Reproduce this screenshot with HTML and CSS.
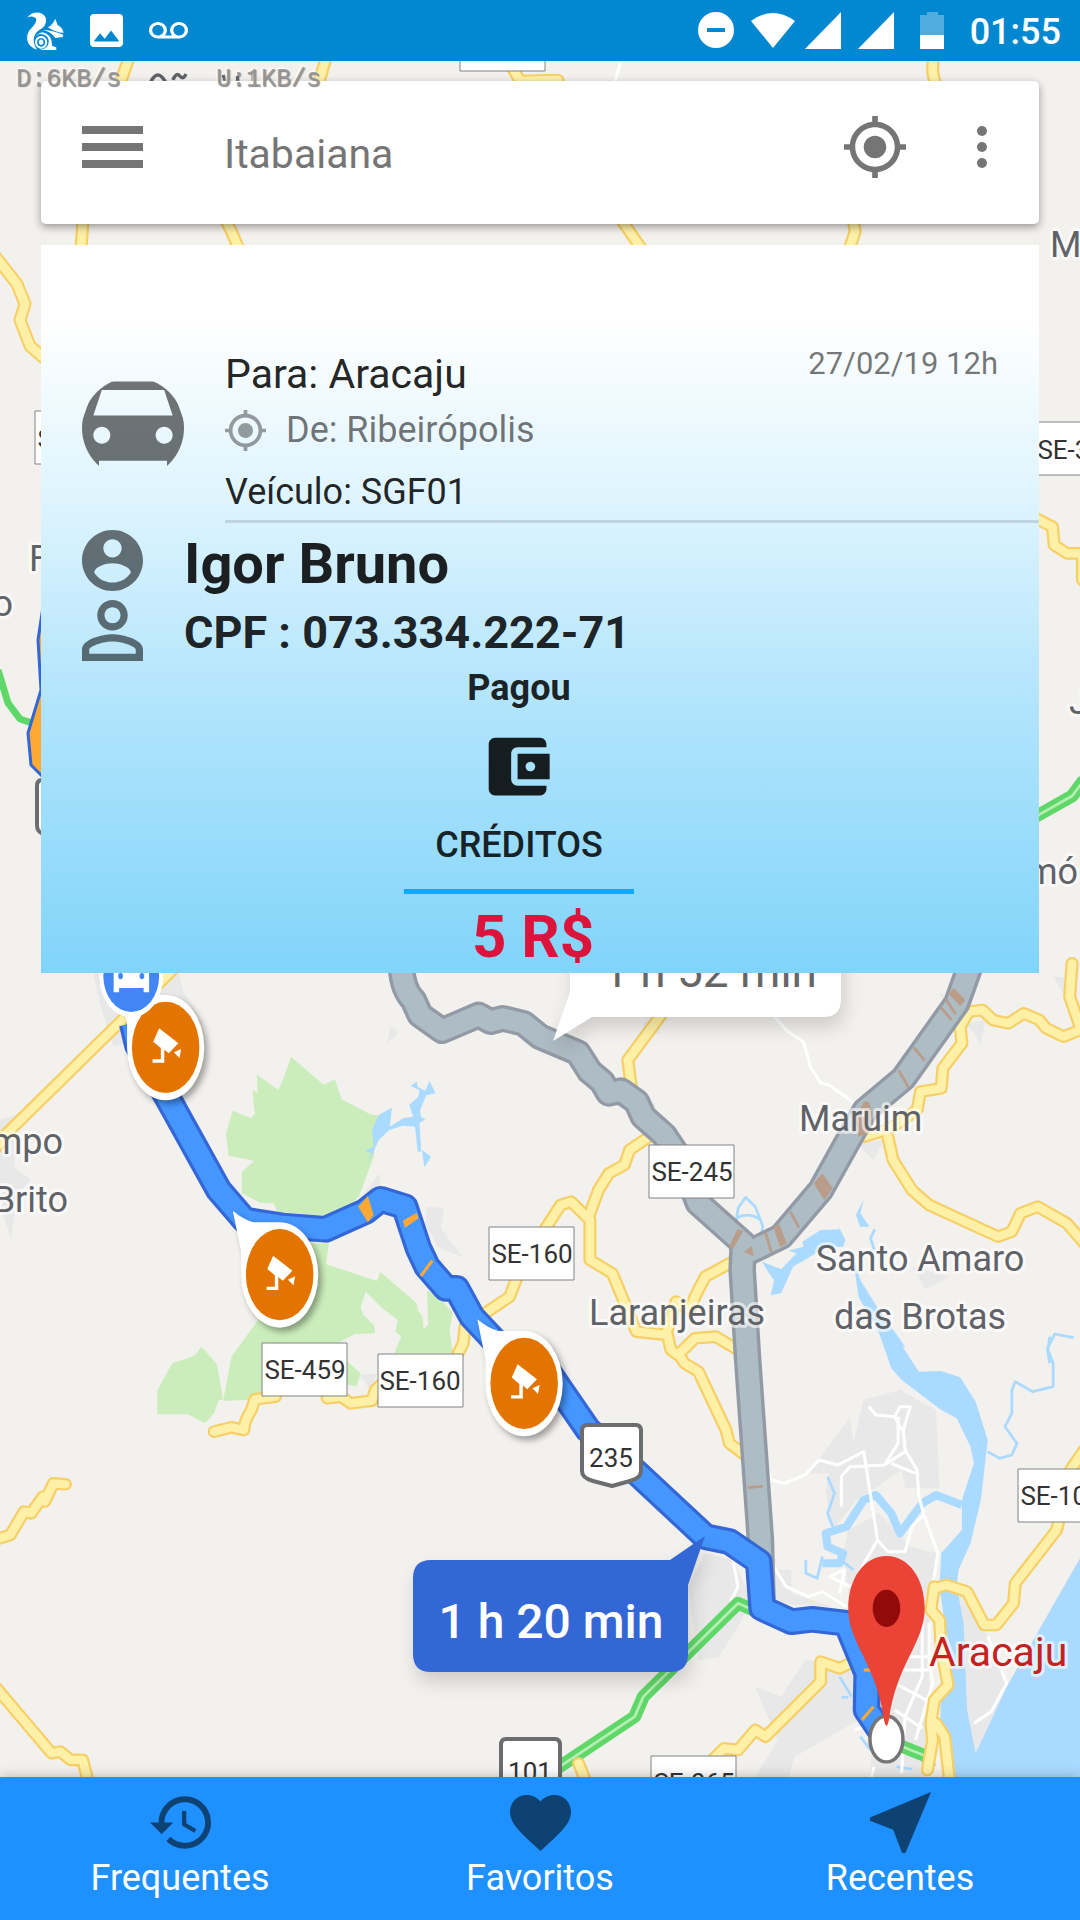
FILE: index.html
```html
<!DOCTYPE html>
<html lang="pt-BR">
<head>
<meta charset="utf-8">
<meta name="viewport" content="width=device-width, initial-scale=1">
<title>Itabaiana</title>
<link rel="stylesheet" href="styles.css">
</head>
<body>
<header class="status">
  <div class="status-group">
    <svg class="squirrel" viewBox="78 35 110 113" preserveAspectRatio="none" aria-hidden="true">
      <path d="M78 52Q92 34 116 37 138 44 134 66 132 76 122 84 100 94 98 116 98 134 108 147 84 140 79 120 75 98 92 82 108 66 105 54 94 44 78 52zM140 80Q154 74 162 55L169 74Q184 82 187 97 164 96 140 80zM124 88Q154 90 186 103L184 109 162 112Q150 94 124 88zM124 95Q152 100 153 136L165 140V148H116Q142 144 143 122 142 104 118 100 106 102 102 112 106 98 124 95z"/>
      <path fill-rule="evenodd" d="M120 106a18 19 0 1 0 .1 0zM120 112a12 13 0 1 1-.1 0zM120 117a7 8 0 1 0 .1 0z"/>
    </svg>
    <svg class="photo" viewBox="3 3 18 18" aria-hidden="true"><path d="M21 19V5c0-1.100-.9-2-2-2H5c-1.100 0-2 .9-2 2v14c0 1.100.9 2 2 2h14c1.100 0 2-.9 2-2zM8.500 13.500l2.500 3.010L14.500 12l4.500 6H5l3.500-4.500z"/></svg>
    <svg class="voicemail" viewBox="0 6 24 12" preserveAspectRatio="none" aria-hidden="true"><path d="M18.500 6C15.460 6 13 8.460 13 11.500c0 1.330.47 2.550 1.260 3.500H9.740c.79-.95 1.260-2.170 1.260-3.500C11 8.460 8.540 6 5.500 6S0 8.460 0 11.500 2.460 17 5.500 17h13c3.040 0 5.500-2.460 5.500-5.500S21.540 6 18.500 6zm-13 9C3.570 15 2 13.430 2 11.500S3.570 8 5.500 8 9 9.570 9 11.500 7.430 15 5.500 15zm13 0c-1.930 0-3.500-1.570-3.500-3.500S16.570 8 18.500 8 22 9.570 22 11.500 20.430 15 18.500 15z"/></svg>
  </div>
  <div class="status-group status-right">
    <svg width="196" height="38" viewBox="0 0 196 38" aria-hidden="true">
      <circle cx="18" cy="18" r="18"/><path class="status-minus" d="M9 16h18v4H9z"/>
      <path d="M53 9Q75-7 97 9L75 36zM143 0V37H107zM196 0V37H160z"/>
    </svg>
    <svg class="battery" width="24" height="38" viewBox="0 0 24 38" aria-hidden="true"><path opacity=".3" d="M7 0h11v3h6v20H0V3h7z"/><path d="M0 23h24v14H0z"/></svg>
    <time>01:55</time>
  </div>
</header>

<main>
  <svg class="map" viewBox="0 61 1080 1716" preserveAspectRatio="xMidYMin slice" role="img" aria-label="Mapa da rota até Aracaju">
    <defs>
      <g id="road-nw"><path d="M376 170L348 250M948 170L925 250M241 660L235 750M655 660L670 690 695 750M1480 190L1510 243 1620 240M2710 170L2708 215 2715 250M1805 660L1865 750M2478 660L2483 695 2465 750"/></g>
      <g id="road-sw"><path d="M-20 575L20 520 350 185 500 30M622 1415L672 1402 708 1410Q710 1380 730 1350L740 1318 800 1310M950 1315L990 1310 1018 1330 1080 1322 1090 1290 1110 1270M1330 1180L1345 1150 1350 1100 1430 1045 1480 1010 1500 955M-10 1738L30 1725 70 1655 90 1660 125 1610 130 1625 155 1570 190 1573M-10 2185L150 2380 175 2375 205 2400 240 2400 260 2480"/></g>
      <g id="road-e"><path d="M355 160L255 300 265 380M310 535L260 570 245 615 200 640 170 690 145 760M10 815L60 735 90 725 145 780 145 900 210 940 250 1040 280 1115 370 1125 380 1170 400 1185 450 1135 510 1130 575 1170M560 905L480 950 450 1010 435 1050 395 1025 370 1110M1580 205L1520 230 1470 205 1450 180 1405 160 1360 190 1315 180 1285 150 1245 155 1220 200 1225 250 1170 325 1165 385 1105 395 1095 450 1040 490 1005 510 940 530M1010 530L1025 600 1080 690 1130 735 1330 830 1370 815 1395 760 1445 740 1530 790 1580 850M1545 10L1538 110 1568 200M400 1180L420 1210 460 1235 540 1410 550 1450 595 1485M1430-1330L1488-1300 1493-1245 1530-1220 1580-1220M1575-1220V-1140"/></g>
      <g id="road-se"><path d="M1145 745L1180 735 1240 755 1290 855 1325 855 1375 790 1380 730 1500 570 1510 530M1580 330L1540 390M1145 740L1135 810 1160 840 1165 930 1185 1035 1145 1080 1135 1150 1140 1200 1125 1290M1150 1150L1175 1190 1190 1330M500 1260L535 1225 575 1230 625 1170 655 1190 815 1025 815 965 870 985 920 960M112 1270L135 1330"/></g>
      <path id="route-alt" d="M-403 20Q-398 90-368 120L-348 165-284 212-178 165-143 185-108 175-48 190 0 230 110 278 145 335 180 365 200 400 235 392 280 425 300 470 360 525 415 610 460 730 590 850 587 930 603 1200 640 1740 645 1940M1255 0L1210 130 1055 355 945 450 885 560 815 690 700 830 600 880"/>
      <path id="route-w" d="M385 190L400 255 490 420 635 690 710 780 820 798 945 808 1060 755 1105 718 1175 740 1215 865 1240 920 1295 985 1325 985 1370 1070 1470 1180 1560 1260"/>
      <path id="route-e" d="M0 60L80 180 140 270 210 330 480 590 550 605 635 665 645 805 730 845 790 838 890 850 950 1000 948 1110 1000 1190"/>
      <g id="camera">
        <path class="pin-white" d="M-136-192Q-105-165-75-157H0A112 158 0 0 1 0 159A112 158 0 0 1-112 0V-70Z"/>
        <ellipse class="pin-orange" rx="98" ry="137"/>
        <path fill="#fff" d="M-19-57L37-12 9 18-4 7V46H-38V36H-14V2L-36-17zM45 5L40 32 24 15z"/>
      </g>
      <g id="route-shield"><path class="shield" d="M7 2H56Q61 2 61 8V48Q61 55 50 58L32 63 13 58Q2 55 2 48V8Q2 2 7 2z"/></g>
      <rect id="state-sign" class="sign" width="85" height="53"/>
    </defs>

    <rect class="land" y="61" width="1080" height="1716"/>

    <!-- Terrain, west -->
    <g transform="translate(0 960) scale(.3444 .3333)">
      <path class="urban" d="M270 40H520L530 90 590 190 330 260 295 150zM1240 740L1290 745 1280 805 1345 893 1270 860 1235 790zM1100 640L1108 690 1045 720zM0 480L60 460 40 620 90 660 50 700 32 840 0 730zM1135 198L1158 220 1124 250zM1045 1245L1095 1240 1075 1290z"/>
      <path class="park" d="M845 290L940 374 972 358 992 418 1075 463 1120 470 1090 540 1085 590 1042 710 980 770 805 755 795 730 755 728 702 700V635L738 603 712 596 664 588 656 522 675 452 730 475 740 460 733 390 748 400 746 344 808 389 825 350zM955 850L947 913 1095 963 1104 935 1210 1030 1213 1050 1227 1070 1230 1108 1243 1095 1240 990 1290 1030 1315 1060 1305 1110 1315 1180H1145L1165 1130 1148 1115 1155 1080 1110 1045 1062 995 1047 1040 1055 1065 1088 1098V1120L1030 1122 980 1150 1010 1205 1047 1240 1035 1280 990 1270 760 1318 648 1323 672 1190 750 1080 850 1000 900 850zM585 1160L630 1212 648 1320 635 1320 622 1360 595 1390 545 1363H457V1290L500 1210 565 1187z"/>
      <path class="water" d="M1060 572L1085 560 1080 510 1100 465 1138 443 1132 500 1170 475 1200 470 1188 435 1215 410 1218 390 1192 378 1210 365 1212 380 1235 392 1247 363 1265 400 1238 406 1220 450 1222 470 1235 478 1218 490 1223 575 1213 575 1205 500 1170 497 1130 510 1100 540 1068 612 1078 580zM1225 570L1252 590 1232 622z"/>
      <g class="casing"><use href="#road-sw"/></g><g class="paving"><use href="#road-sw"/></g>
    </g>
    <!-- Terrain, east -->
    <g transform="translate(540 960) scale(.3444 .3333)">
      <path class="urban" d="M1490 50L1545 55 1525 110zM300 185H350L345 220H300zM1235 190L1292 180 1280 260 1262 220zM920 550L1000 540 968 600zM1080 920L1190 950 1120 988zM310 430H335V480zM1160 100L1190 110 1180 140z"/>
      <path class="water" d="M905 870L925 1010 985 1120 1000 1160H1060L1040 1130 990 1060 930 960zM670 1006L680 960 665 940 645 905 700 928 745 880 720 872 765 860 762 845 815 810 870 808 865 795 887 840 880 860 830 862 735 920 700 1000zM940 720L930 760 957 800 930 800 917 765z"/>
      <path class="stream" d="M568 800L575 745 597 712 625 740 647 800 640 840M570 775Q600 755 640 778M490 710L510 730M972 808L960 835 975 885M1550 1133L1495 1122 1473 1165 1480 1210"/>
      <path class="lane" d="M680 170L720 215 765 245 785 320 815 370 840 375 920 435"/>
    </g>
    <!-- Terrain, coast -->
    <g transform="translate(540 1340) scale(.3444 .3333)">
      <path class="urban" d="M940 180L1045 150 1150 210 1160 445H1060L1050 390 920 480 850 570 830 450 840 400 780 400 900 230 910 310zM895 570L985 520 1075 620 1155 640 1135 750 1125 930 1145 1260 1110 1320H960L970 900 900 790 880 640zM430 740L480 640 560 660 615 780 580 850 520 950 460 960zM660 690H730V760L850 800 680 790zM625 1040L700 1070 770 960 920 970 940 1130 740 1250 720 1320H620L690 1200zM1215 760L1300 890 1360 1030 1265 1240 1230 1100z"/>
      <path class="water" d="M985-20L1040 0 1100 95 1165 93 1220 112 1265 185 1300 300 1280 480 1250 610 1215 690 1210 740 1230 850 1240 1110 1265 1240 1355 1040 1568 655V1320H1200L1160 1200 1165 1050 1200 1030 1160 740 1165 640 1225 570V480L1260 370 1250 320 1210 235 1165 210 1050 120 1020 85z"/>
      <path class="creek" d="M1225 495L1150 465 1110 490 1045 580 1020 520 975 465 940 480 890 560 830 580 835 620 880 640 870 670 820 670"/>
      <path class="stream" d="M835 410L855 460 835 520 850 560M820 650L805 715 772 700V660M880 665L910 690M1480-10L1475 30 1490 70V140L1430 155 1380 125 1370 150V220L1350 260 1385 310 1370 345 1335 355 1300 335M870 1010L905 1070M875 1072H895M930 1190L960 1230M1035 1280L1080 1288"/>
      <path class="lane" d="M655 370L670 420 710 430 770 405 810 360 865 375 940 335 980 600 1010 635 1060 635 1080 560 1115 525 1155 640 1140 740M955 200L975 225 1030 230 1045 200 1075 200 1055 270 1060 330 1095 390 1100 470 1115 525M1030 230L1050 270M1040 230V310L1000 375 900 380 875 410V500M1060 335L1000 375M1020 370L1090 400M980 600L930 690M660 650L715 740 780 770 820 755 890 800M560 660L575 740 555 780 575 800M840 710L885 690 870 760M840 710L900 740M1130 850V960L1140 1030 1090 1200M1110 850V1010L1060 1130 1050 1300M1040 1035L1130 1085M1050 950H1130M1040 990H1130M1030 1110L1110 1165M915 1170L940 1160M970 1280L960 1320M1260 1150L1310 1115 1355 1030 1300 890"/>
      <path class="thruway" d="M50 1285L275 1130 300 1070 575 790 630 815M1040 1215L1125 1250 1130 1280"/>
      <path class="thruway-line" d="M50 1285L275 1130 300 1070 575 790 630 815M1040 1215L1120 1248"/>
    </g>

    <g transform="scale(.3444 .3333)">
      <path class="lane" d="M1803 183L1786 243"/>
      <g class="casing"><use href="#road-nw"/></g><g class="paving"><use href="#road-nw"/></g>
      <path class="ghost" d="M438 245Q458 205 480 245M502 240Q512 215 522 228T540 222M648 225L655 245M690 228V245M735 220V245"/>
    </g>
    <g transform="translate(540 960) scale(.3444 .3333)">
      <g class="casing"><use href="#road-e"/></g><g class="paving"><use href="#road-e"/></g>
      <path class="thruway" d="M1430-425L1545-492 1580-540"/><path class="thruway-line" d="M1430-425L1545-492 1580-540"/>
    </g>
    <g transform="translate(540 1340) scale(.3444 .3333)">
      <g class="casing"><use href="#road-se"/></g><g class="paving"><use href="#road-se"/></g>
    </g>
    <path class="west-casing" d="M-5 256L17 284 25 304 20 320 30 346 45 359"/>
    <path class="west-paving" d="M-5 256L17 284 25 304 20 320 30 346 45 359"/>
    <path class="west-thruway" d="M-2 670L8 703 20 719 32 723"/>
    <path class="west-route" d="M44 600L38 640 41 690 28 733 31 765 46 780"/>

    <!-- Routes -->
    <g transform="translate(540 960) scale(.3444 .3333)">
      <use class="alt-edge" href="#route-alt"/><use class="alt-fill" href="#route-alt"/>
      <path class="slow" d="M1185 100L1203 85 1235 120 1220 138zM940 425H955L965 460 955 520 925 530 915 480zM795 670L820 640 850 685 825 720zM678 800L695 793 716 850 697 862zM573 808L590 812 562 865 548 862zM592 875L615 858 620 888z"/>
      <path class="slow-line" d="M1178 118L1207 162M1162 140L1195 180M1085 262L1117 302M1042 332L1070 382M727 755L752 803M655 818L672 878M603 1583L648 1579"/>
    </g>
    <g transform="translate(0 960) scale(.3444 .3333)">
      <use class="main-edge" href="#route-w"/><use class="main-fill" href="#route-w"/>
      <path class="jam" d="M1040 740L1068 708 1085 765 1068 787zM1170 782L1210 758 1215 775 1176 803z"/>
      <path class="jam-line" d="M1222 948L1255 902"/>
    </g>
    <g transform="translate(540 1340) scale(.3444 .3333)">
      <use class="main-edge" href="#route-e"/><use class="main-fill" href="#route-e"/>
      <path class="jam-line" d="M935 1140L968 1100M940 990H965"/>
    </g>

    <!-- Road numbers -->
    <g class="sign-text">
      <use href="#state-sign" x="460" y="18"/>
      <use href="#state-sign" x="262" y="1343"/><text x="305" y="1379">SE-459</text>
      <use href="#state-sign" x="378" y="1354"/><text x="420" y="1390">SE-160</text>
      <use href="#state-sign" x="489" y="1227"/><text x="532" y="1263">SE-160</text>
      <use href="#state-sign" x="649" y="1145"/><text x="692" y="1181">SE-245</text>
      <use href="#state-sign" x="1018" y="1469"/><text x="1061" y="1505">SE-100</text>
      <use href="#state-sign" x="651" y="1756"/><text x="694" y="1792">SE-065</text>
      <use href="#state-sign" x="1035" y="422"/><text x="1078" y="459">SE-339</text>
      <use href="#state-sign" x="35" y="411"/><text x="78" y="448">SE-240</text>
      <use href="#route-shield" x="580" y="1423"/><text x="611" y="1467">235</text>
      <use href="#route-shield" x="499" y="1737"/><text x="530" y="1781">101</text>
      <use href="#route-shield" x="35" y="778"/>
    </g>
    <g class="town">
      <text x="799" y="1131">Maruim</text>
      <text x="589" y="1325">Laranjeiras</text>
      <text x="920" y="1271" text-anchor="middle">Santo Amaro</text>
      <text x="920" y="1329" text-anchor="middle">das Brotas</text>
      <text x="63" y="1154" text-anchor="end">Campo</text>
      <text x="68" y="1212" text-anchor="end">do Brito</text>
      <text x="1050" y="257">M</text>
      <text x="1069" y="714">J</text>
      <text x="1078" y="884" text-anchor="end">mó</text>
      <text x="29" y="571">F</text>
      <text x="13" y="616" text-anchor="end">o</text>
      <text class="city" x="929" y="1666">Aracaju</text>
    </g>

    <!-- Travel times -->
    <g class="callout"><path fill="#fff" d="M570 940H841V999Q841 1017 823 1017H592L553 1041 570 992z"/></g>
    <text class="time-alt" x="710" y="987">1 h 52 min</text>
    <g class="callout"><path fill="#3367d6" d="M431 1560H670L705 1536 688 1585V1654Q688 1672 670 1672H431Q413 1672 413 1654V1578Q413 1560 431 1560z"/></g>
    <text class="time-main" x="551" y="1638">1 h 20 min</text>

    <!-- Pins -->
    <g transform="translate(0 960) scale(.3444 .3333)">
      <use href="#camera" x="481" y="262"/><use href="#camera" x="812" y="944"/><use href="#camera" x="1522" y="1270"/>
      <ellipse cx="381" cy="50" rx="92" ry="122" fill="#fff"/><ellipse cx="381" cy="48" rx="81" ry="108" fill="#4285f4"/>
      <path fill="#fff" d="M330 20H433V97H417V84H346V97H330z"/><path fill="#4285f4" d="M350 38a7 10 0 1 0 .1 0zM412 38a7 10 0 1 0 .1 0z"/>
    </g>
    <g transform="translate(540 1340) scale(.3444 .3333)">
      <ellipse class="goal" cx="1006" cy="1197" rx="48" ry="69"/>
      <path fill="#eb4336" d="M1006 648C1070 648 1117 715 1117 805 1117 910 1035 970 1013 1140Q1006 1175 999 1140C977 970 895 910 895 805 895 715 942 648 1006 648z"/>
      <ellipse cx="1006" cy="805" rx="40" ry="56" fill="#930a0a"/>
    </g>
  </svg>

  <div class="netspeed"><span>D:6KB/s</span><span>U:1KB/s</span></div>

  <section class="search">
    <button type="button" aria-label="Menu"><svg width="61" height="42" viewBox="0 0 61 42"><path d="M0 0h61v8H0zM0 17h61v8H0zM0 34h61v8H0z"/></svg></button>
    <h1>Itabaiana</h1>
    <button type="button" aria-label="Minha localização"><svg width="62" height="62" viewBox="1 1 22 22"><use href="#gps"/></svg></button>
    <button type="button" aria-label="Mais opções"><svg width="12" height="42" viewBox="0 0 12 42"><circle cx="6" cy="5" r="5"/><circle cx="6" cy="21" r="5"/><circle cx="6" cy="37" r="5"/></svg></button>
  </section>

  <section class="card">
    <div class="trip">
      <svg class="car" viewBox="3 4.200 18 18" aria-hidden="true"><path d="M18.920 6.010C18.720 5.420 18.160 5 17.500 5h-11c-.66 0-1.210.42-1.420 1.010L3 12v8c0 .55.45 1 1 1h1c.55 0 1-.45 1-1v-1h12v1c0 .55.45 1 1 1h1c.55 0 1-.45 1-1v-8l-2.080-5.990zM6.500 16c-.83 0-1.500-.67-1.500-1.500S5.670 13 6.500 13s1.500.67 1.500 1.500S7.330 16 6.500 16zm11 0c-.83 0-1.500-.67-1.500-1.500s.67-1.500 1.500-1.500 1.500.67 1.500 1.500-.67 1.500-1.500 1.500zM5 11l1.500-4.500h11L19 11H5z"/></svg>
      <div class="trip-info">
        <div class="trip-head"><h2>Para: Aracaju</h2><time>27/02/19 12h</time></div>
        <p class="origin"><svg width="41" height="41" viewBox="1 1 22 22" aria-hidden="true"><path id="gps" d="M12 8c-2.210 0-4 1.790-4 4s1.790 4 4 4 4-1.790 4-4-1.790-4-4-4zm8.940 3c-.46-4.170-3.770-7.480-7.940-7.940V1h-2v2.060C6.830 3.520 3.520 6.830 3.060 11H1v2h2.060c.46 4.170 3.770 7.480 7.940 7.940V23h2v-2.060c4.170-.46 7.480-3.770 7.940-7.940H23v-2h-2.060zM12 19c-3.870 0-7-3.130-7-7s3.130-7 7-7 7 3.130 7 7-3.130 7-7 7z"/></svg><span>De: Ribeirópolis</span></p>
        <p class="vehicle">Veículo: SGF01</p>
      </div>
    </div>
    <div class="person">
      <svg viewBox="2 2 20 20" aria-hidden="true"><path d="M12 2C6.480 2 2 6.480 2 12s4.480 10 10 10 10-4.480 10-10S17.520 2 12 2zm0 3c1.660 0 3 1.340 3 3s-1.340 3-3 3-3-1.340-3-3 1.340-3 3-3zm0 14.200c-2.500 0-4.710-1.280-6-3.220.03-1.990 4-3.080 6-3.080 1.990 0 5.970 1.090 6 3.080-1.290 1.940-3.500 3.220-6 3.220z"/></svg>
      <strong class="name">Igor Bruno</strong>
    </div>
    <div class="person">
      <svg viewBox="4 4 16 16" aria-hidden="true"><path d="M12 5.900c1.160 0 2.100.94 2.100 2.100s-.94 2.100-2.100 2.100S9.900 9.160 9.900 8s.94-2.100 2.100-2.100m0 9c2.970 0 6.100 1.460 6.100 2.100v1.100H5.900V17c0-.64 3.130-2.100 6.100-2.100M12 4C9.790 4 8 5.790 8 8s1.790 4 4 4 4-1.790 4-4-1.790-4-4-4zm0 9c-2.670 0-8 1.340-8 4v3h16v-3c0-2.660-5.330-4-8-4z"/></svg>
      <strong class="cpf">CPF : 073.334.222-71</strong>
    </div>
    <div class="payment">
      <strong class="paid">Pagou</strong>
      <button class="credits" type="button">
        <svg width="77" height="77" viewBox="0.600 0 24 24" aria-hidden="true"><path d="M21 18v1c0 1.100-.9 2-2 2H5c-1.110 0-2-.9-2-2V5c0-1.100.89-2 2-2h14c1.100 0 2 .9 2 2v1h-9c-1.110 0-2 .9-2 2v8c0 1.100.89 2 2 2h9zm-9-2h10V8H12v8zm4-2.500c-.83 0-1.500-.67-1.500-1.500s.67-1.500 1.500-1.500 1.500.67 1.500 1.500-.67 1.500-1.500 1.500z"/></svg>
        <span>CRÉDITOS</span>
      </button>
      <strong class="amount">5 R$</strong>
    </div>
  </section>
</main>

<nav class="tabs">
  <a href="#frequentes"><svg viewBox="1 1.500 21 21" aria-hidden="true"><path d="M13 3c-4.970 0-9 4.030-9 9H1l3.890 3.890.07.14L9 12H6c0-3.870 3.130-7 7-7s7 3.130 7 7-3.130 7-7 7c-1.930 0-3.680-.79-4.940-2.060l-1.420 1.420C8.270 19.990 10.510 21 13 21c4.970 0 9-4.030 9-9s-4.030-9-9-9zm-1 5v5l4.280 2.540.72-1.210-3.500-2.080V8H12z"/></svg>Frequentes</a>
  <a href="#favoritos"><svg viewBox="2 2 20 20" aria-hidden="true"><path d="M12 21.350l-1.450-1.320C5.400 15.360 2 12.280 2 8.500 2 5.420 4.420 3 7.500 3c1.740 0 3.410.81 4.500 2.090C13.090 3.810 14.760 3 16.500 3 19.580 3 22 5.420 22 8.500c0 3.780-3.400 6.860-8.550 11.540L12 21.350z"/></svg>Favoritos</a>
  <a href="#recentes"><svg viewBox="3 3 18 18" aria-hidden="true"><path d="M21 3L3 10.530v.98l6.840 2.650L12.480 21h.98L21 3z"/></svg>Recentes</a>
</nav>
</body>
</html>
```
FILE: styles.css
```css
* { box-sizing: border-box; }

body {
  margin: 0;
  min-height: 100vh;
  display: flex;
  flex-direction: column;
  font-family: Roboto, "Noto Sans", sans-serif;
  font-size: 36px;
  color: rgba(0, 0, 0, .87);
  background: #f3f1ee;
}

h1, h2, p { margin: 0; font-weight: 400; }
button { border: 0; padding: 0; background: none; font: inherit; color: inherit; cursor: pointer; }
svg { display: block; flex: none; }

/* Status bar */
.status {
  display: flex;
  justify-content: space-between;
  height: 61px;
  padding: 0 19px 0 27px;
  background: #0288d1;
  color: #fff;
  fill: #fff;
}
.status-group { display: flex; align-items: center; gap: 26px; }
.status-time { font-weight: 500; }
.status time { font-weight: 500; line-height: 61px; padding-top: 4px; }
.status-minus { fill: #0288d1; }
.squirrel { width: 37px; height: 38px; }
.photo { width: 33px; height: 33px; }
.voicemail { width: 39px; height: 18px; }

/* Map */
main {
  position: relative;
  flex: 1;
  display: flex;
  flex-direction: column;
  gap: 21px;
  padding: 20px 41px;
}
.map { position: absolute; inset: 0; width: 100%; height: 100%; }
.map path, .map use { stroke-linejoin: round; }
.land { fill: #f3f1ee; }
.urban { fill: #e8e8e9; }
.park { fill: #cbedbb; }
.water { fill: #aadaff; }
.stream, .creek { fill: none; stroke: #aadaff; stroke-width: 8; }
.creek { stroke-width: 24; }
.lane { fill: none; stroke: #fff; stroke-width: 9; }
.casing, .paving { fill: none; stroke: #f6cf65; stroke-width: 38; stroke-linecap: round; }
.paving { stroke: #fff0a8; stroke-width: 25; }
.thruway { fill: none; stroke: #5fd769; stroke-width: 38; }
.thruway-line { fill: none; stroke: #b5eeb2; stroke-width: 8; }
.ghost { fill: none; stroke: #5f6368; stroke-width: 10; }
.west-casing { fill: none; stroke: #f6cf65; stroke-width: 13; }
.west-paving { fill: none; stroke: #fff0a8; stroke-width: 9; }
.west-thruway { fill: none; stroke: #5fd769; stroke-width: 7; }
.west-route { fill: #ffa833; stroke: #3467d6; stroke-width: 3; }
.alt-edge, .main-edge { fill: none; stroke: #929ba5; stroke-width: 80; }
.alt-fill { fill: none; stroke: #aebcc3; stroke-width: 60; }
.main-edge { stroke: #3467d6; }
.main-fill { fill: none; stroke: #4596ff; stroke-width: 61; }
.slow { fill: #b99c89; }
.slow-line { stroke: #b99c89; stroke-width: 8; }
.jam { fill: #ffa833; }
.jam-line { stroke: #ffa833; stroke-width: 9; }
.sign { fill: #fff; stroke: #808285; stroke-width: 1; }
.shield { fill: #fff; stroke: #6b6d6f; stroke-width: 4; }
.sign-text { font-size: 26px; text-anchor: middle; fill: #333; }
.town {
  font-size: 36px;
  fill: #5f6368;
  stroke: rgba(255, 255, 255, .6);
  stroke-width: 6;
  stroke-linejoin: round;
  paint-order: stroke;
}
.city { font-size: 41px; fill: #c5221f; }
.callout { filter: drop-shadow(3px 10px 9px rgba(0, 0, 0, .15)); }
.time-alt, .time-main { font-size: 48px; font-weight: 500; text-anchor: middle; fill: #fff; }
.time-alt { font-size: 46px; font-weight: 400; fill: #666; }
.pin-white { fill: #fff; filter: drop-shadow(10px 12px 9px rgba(0, 0, 0, .35)); }
.pin-orange { fill: #e37400; }
.goal { fill: #fff; stroke: #757575; stroke-width: 10; }

/* Download and upload meter, floating over the map */
.netspeed {
  position: absolute;
  top: 4px;
  left: 16px;
  display: flex;
  gap: 95px;
  z-index: 2;
  font: 25px/30px "Liberation Mono", monospace;
  color: rgba(150, 150, 150, .9);
  text-shadow: 1px 1px 1px #888, -1px -1px 2px #fff;
}

/* Search bar */
.search {
  position: relative;
  display: flex;
  height: 143px;
  padding: 0 51px 0 41px;
  border-radius: 5px;
  background: #fff;
  color: #757575;
  fill: #757575;
  box-shadow: 0 3px 9px rgba(0, 0, 0, .38);
}
.search button { height: 132px; }
.search h1 { flex: 1; padding-left: 81px; font-size: 41px; line-height: 147px; }
.search button + button { margin-left: 70px; }

/* Trip card */
.card {
  position: relative;
  padding-top: 101px;
  background: linear-gradient(#fff 10%, #e1f5fe 33%, #b3e5fc 62%, #81d4fa);
}
.trip { display: flex; gap: 41px; padding-left: 41px; }
.car { width: 102px; height: 102px; margin-top: 31px; border-radius: 50%; fill: rgba(0, 0, 0, .54); }
.trip-info { flex: 1; border-bottom: 3px solid rgba(0, 0, 0, .12); }
.trip-head { display: flex; justify-content: space-between; padding-right: 41px; }
.trip-head h2 { font-size: 41px; line-height: 56px; }
.trip-head time { font-size: 31px; line-height: 36px; color: rgba(0, 0, 0, .54); }
.origin { display: flex; align-items: center; gap: 20px; line-height: 56px; color: rgba(0, 0, 0, .54); }
.origin svg { fill: rgba(0, 0, 0, .38); }
.vehicle { padding-top: 6px; line-height: 56px; }
.person { display: flex; align-items: center; gap: 41px; padding-left: 41px; }
.person svg { width: 61px; height: 61px; fill: rgba(0, 0, 0, .54); }
.name { padding-top: 8px; font-size: 56px; line-height: 66px; }
.cpf { padding-top: 6px; font-size: 45px; line-height: 60px; }
.payment { display: flex; flex-direction: column; align-items: center; padding: 1px 42px 0 0; }
.paid { line-height: 48px; }
.credits {
  display: flex;
  flex-direction: column;
  align-items: center;
  gap: 16px;
  width: 230px;
  padding: 16px 0 20px;
  border-bottom: 5px solid #00b0ff;
  font-weight: 500;
  line-height: 48px;
  fill: rgba(0, 0, 0, .87);
}
.amount { padding: 6px 0 0 28px; font-size: 60px; line-height: 73px; color: #dc143c; }

/* Bottom navigation */
.tabs { position: relative; display: flex; background: #1e90ff; box-shadow: 0 0 12px rgba(0, 0, 0, .25); }
.tabs a {
  flex: 1;
  display: flex;
  flex-direction: column;
  align-items: center;
  gap: 4px;
  padding: 15px 0 21px;
  line-height: 42px;
  color: #fff;
  text-decoration: none;
}
.tabs svg { width: 61px; height: 61px; fill: #0e4272; }
```
